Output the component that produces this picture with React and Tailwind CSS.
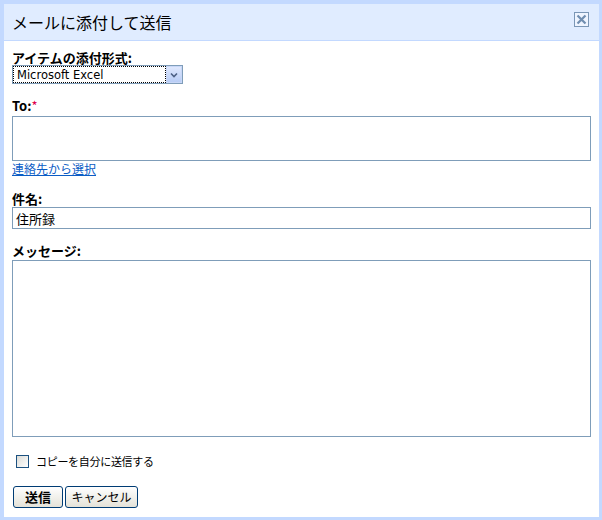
const jp = { fontFamily: '"Noto Sans CJK JP", "Noto Sans", sans-serif' }

/* ── Close box in the header ── */
function CloseBox() {
  return (
    <svg width="15" height="15" viewBox="0 0 15 15" className="self-start mt-2">
      <rect x="0.5" y="0.5" width="14" height="14" fill="#eef4ff" stroke="#7a96b6" />
      <path d="M3.5 3.5 L11.5 11.5 M11.5 3.5 L3.5 11.5" stroke="#6f8db0" strokeWidth="2.2" />
    </svg>
  )
}

/* ── Fake XP select ── */
function FormatSelect() {
  return (
    <div className="w-[171px] h-[19px] border border-[#7f9db9] flex bg-white">
      <div className="flex-1 border border-dotted border-black flex items-center pl-[3px]">
        <span className="text-[11.5px] leading-[15px] pt-px text-black" style={{ fontFamily: '"DejaVu Sans", sans-serif' }}>
          Microsoft Excel
        </span>
      </div>
      <div className="w-[16px] h-full bg-gradient-to-b from-[#dfe8fd] to-[#b9cdf6] border border-[#c8d7f7] flex items-center justify-center">
        <svg width="8" height="6" viewBox="0 0 8 6">
          <path d="M1 1.5 L4 4.5 L7 1.5" stroke="#4d6185" strokeWidth="1.6" fill="none" />
        </svg>
      </div>
    </div>
  )
}

function Label({ children, className = '' }) {
  return <div className={`text-[13px] leading-[14px] font-bold text-black ${className}`}>{children}</div>
}

function Button({ children, className = '' }) {
  return (
    <button className={`h-[22px] border border-[#003c74] rounded-[3px] bg-gradient-to-b from-white to-[#e4e2d8] text-black flex items-center justify-center ${className}`}>
      {children}
    </button>
  )
}

export default function App() {
  return (
    <div className="w-[602px] h-[520px] bg-[#c3d9ff] pt-1 pl-1 pr-[3px] pb-[3px]" style={jp}>
      <div className="h-full bg-white flex flex-col">
        {/* Header */}
        <div className="h-[37px] bg-[#e0ecff] border-b border-[#c3d9ff] flex items-center justify-between pl-2 pr-[10px]">
          <h1 className="text-[16px] leading-none text-black">メールに添付して送信</h1>
          <CloseBox />
        </div>

        {/* Form */}
        <div className="px-2 pt-[10px] flex flex-col">
          <Label>アイテムの添付形式:</Label>
          <FormatSelect />

          <Label className="mt-[15px]">
            To:<span className="text-[#e0004a] font-normal">*</span>
          </Label>
          <div className="mt-[3px] h-[45px] border border-[#7f9db9]" />
          <a href="#" className="mt-px text-[12px] leading-[14px] text-[#0a5cc5] underline self-start">
            連絡先から選択
          </a>

          <Label className="mt-4">件名:</Label>
          <div className="mt-px h-[22px] border border-[#7f9db9] flex items-center px-[3px]">
            <span className="text-[13px] leading-none text-black">住所録</span>
          </div>

          <Label className="mt-[15px]">メッセージ:</Label>
          <div className="mt-[2px] h-[177px] border border-[#7f9db9]" />

          <label className="mt-[18px] flex items-center pl-1 gap-[7px]">
            <span className="w-[13px] h-[13px] border border-[#1c5180] bg-gradient-to-br from-[#dcdcd7] to-white" />
            <span className="text-[11px] leading-[13px] tracking-[-0.3px] text-black">コピーを自分に送信する</span>
          </label>

          <div className="mt-[18px] flex gap-[2px] pl-px">
            <Button className="w-[50px] text-[13px] font-bold">送信</Button>
            <Button className="w-[73px] text-[12px]">キャンセル</Button>
          </div>
        </div>
      </div>
    </div>
  )
}
